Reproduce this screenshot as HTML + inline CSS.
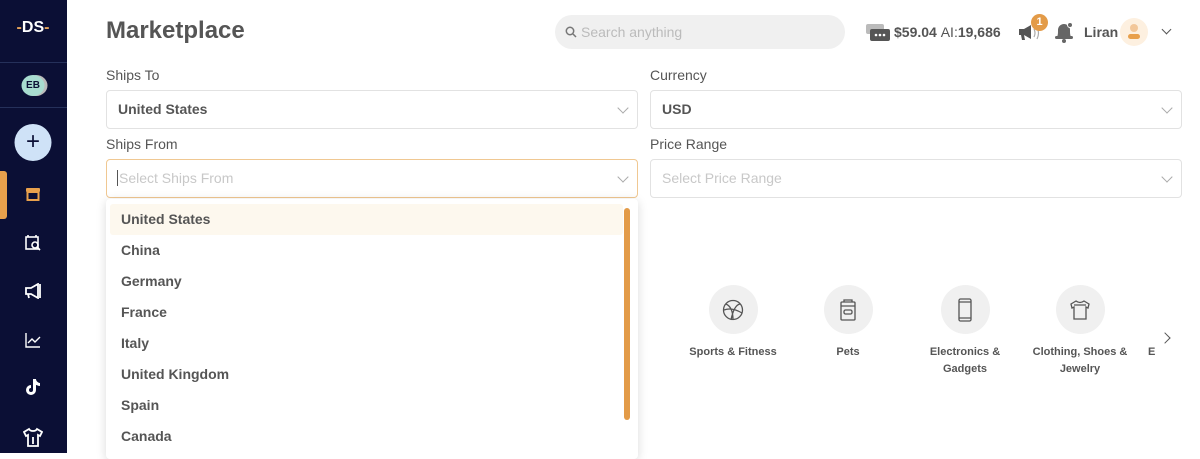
<!DOCTYPE html>
<html><head><meta charset="utf-8"><style>
*{box-sizing:border-box;margin:0;padding:0}
body{width:1200px;height:453px;overflow:hidden;background:#fff;font-family:"Liberation Sans",sans-serif;color:#444;position:relative}
.sb{position:absolute;left:0;top:0;width:67px;height:453px;background:#0b0f35}
.sep{position:absolute;left:0;width:67px;height:1px;background:#25305a}
.ic{position:absolute;left:33px;transform:translateX(-50%)}
.lbl{position:absolute;font-size:14px;color:#555}
.sel{position:absolute;height:39px;border:1px solid #e2e2e2;border-radius:4px;font-size:14px;padding:0 11px;line-height:37px;font-weight:bold;color:#555}
.chev{position:absolute;right:10px;top:13px;width:8px;height:8px;border-right:1px solid #aaa;border-bottom:1px solid #aaa;transform:rotate(45deg)}
.ph{color:#c8c8c8;font-weight:normal}
.dd{position:absolute;left:106px;top:199px;width:532px;height:260px;background:#fff;border-radius:4px;box-shadow:0 2px 10px rgba(0,0,0,.15)}
.opt{height:31px;line-height:31px;padding-left:11px;font-size:14px;color:#555;font-weight:bold;margin:0 15px 0 4px;border-radius:3px}
.cat{position:absolute;text-align:center;font-size:11px;font-weight:bold;color:#555;line-height:17px}
.circ{width:49px;height:49px;border-radius:50%;background:#f0f0f0;margin:0 auto 10px;display:flex;align-items:center;justify-content:center}
</style></head><body>
<div class="sb">
 <div class="ic" style="top:19px;color:#fff;font-weight:bold;font-size:16px;white-space:nowrap"><span style="color:#e8a45a">-</span>DS<span style="color:#e8a45a">-</span></div>
 <div class="sep" style="top:62px"></div>
 <div class="ic" style="top:75px;width:23px;height:21px;border-radius:50%;background:#a8dcd0;color:#0b0f35;font-size:10px;font-weight:bold;text-align:center;line-height:21px;box-shadow:3px 0 0 #bbb">EB</div>
 <div class="sep" style="top:107px"></div>
 <div class="ic" style="top:124px;width:37px;height:37px;border-radius:50%;background:#cfe2f7;color:#0b0f35;font-size:24px;text-align:center;line-height:36px">+</div>
 <div style="position:absolute;left:0;top:171px;width:7px;height:48px;background:#e8a04c;border-radius:0 3px 3px 0"></div>
 <svg class="ic" style="top:187px" width="16" height="14" viewBox="0 0 16 14"><rect x="1" y="1" width="14" height="4" rx="1" fill="#e8a04c"/><rect x="2.5" y="5" width="11" height="8" fill="none" stroke="#e8a04c" stroke-width="2"/></svg>
 <svg class="ic" style="top:234px" width="18" height="18" viewBox="0 0 18 18" fill="none" stroke="#fff" stroke-width="1.6"><rect x="2" y="3" width="12" height="12"/><circle cx="11" cy="11" r="3"/><path d="M13 13l3 3M4 3V1M12 3V1"/></svg>
 <svg class="ic" style="top:283px" width="18" height="16" viewBox="0 0 18 16" fill="none" stroke="#fff" stroke-width="1.8"><path d="M2 5h5l7-4v14l-7-4H2zM4 11l1 4M16 1v14"/></svg>
 <svg class="ic" style="top:332px" width="16" height="16" viewBox="0 0 16 16" fill="none" stroke="#fff" stroke-width="1.4"><path d="M1 1v14h14M3 11l4-4 3 3 5-5"/></svg>
 <svg class="ic" style="top:379px" width="14" height="16" viewBox="0 0 14 16" fill="#fff"><path d="M7 0h3c0 2 2 4 4 4v3c-2 0-3-1-4-1v5a5 5 0 1 1-5-5v3a2 2 0 1 0 2 2z"/></svg>
 <svg class="ic" style="top:427px" width="20" height="20" viewBox="0 0 20 20" fill="none" stroke="#fff" stroke-width="1.8"><path d="M6 2l-5 3 2 4 2-1v11h10V8l2 1 2-4-5-3c-1 2-3 2-4 2s-3 0-4-2z"/><path d="M10 10v7"/></svg>
</div>

<div style="position:absolute;left:106px;top:17px;font-size:24px;font-weight:bold;color:#555">Marketplace</div>
<div style="position:absolute;left:555px;top:15px;width:290px;height:34px;border-radius:17px;background:#f0f0f0;font-size:14px;color:#bbb;line-height:34px;padding-left:26px">Search anything
 <svg style="position:absolute;left:10px;top:11px" width="12" height="12" viewBox="0 0 12 12" fill="none" stroke="#777" stroke-width="1.5"><circle cx="5" cy="5" r="3.7"/><path d="M8 8l3 3"/></svg></div>
<svg style="position:absolute;left:866px;top:24px" width="24" height="17" viewBox="0 0 24 17"><rect x="0" y="0" width="18" height="10" rx="2" fill="#bbb"/><rect x="4" y="5" width="20" height="12" rx="2" fill="#555"/><circle cx="10" cy="11" r="1.3" fill="#fff"/><circle cx="14" cy="11" r="1.3" fill="#fff"/><circle cx="18" cy="11" r="1.3" fill="#fff"/></svg>
<div style="position:absolute;left:894px;top:24px;font-size:14px;color:#555;font-weight:bold">$59.04 <span style="font-weight:normal">AI:</span>19,686</div>
<svg style="position:absolute;left:1018px;top:24px" width="22" height="18" viewBox="0 0 22 18"><path d="M1 5h5l7-4v14l-7-4H1zM3 11l1 5h3l-1-5z" fill="#555"/><path d="M16 5q2 4 0 8M19 3q3 6 0 12" stroke="#aaa" fill="none" stroke-width="1.2"/></svg>
<div style="position:absolute;left:1031px;top:14px;width:17px;height:17px;border-radius:50%;background:#e39b48;color:#fff;font-size:11px;font-weight:bold;text-align:center;line-height:17px">1</div>
<svg style="position:absolute;left:1054px;top:21px" width="20" height="22" viewBox="0 0 20 22"><path d="M3 16c1-2 1-4 1-7a6 6 0 0 1 12 0c0 3 0 5 1 7z" fill="#666"/><rect x="1" y="15" width="18" height="3" rx="1.5" fill="#666"/><circle cx="10" cy="20" r="2" fill="#666"/><circle cx="16" cy="4" r="2.5" fill="#666" stroke="#fff"/></svg>
<div style="position:absolute;left:1084px;top:24px;font-size:14px;font-weight:bold;color:#555">Liran</div>
<div style="position:absolute;left:1120px;top:18px;width:28px;height:28px;border-radius:50%;background:#fdf0e0"><div style="position:absolute;left:10px;top:6px;width:8px;height:8px;border-radius:50%;background:#f2c79a"></div><div style="position:absolute;left:8px;top:16px;width:12px;height:5px;border-radius:3px;background:#e8a04c"></div></div>
<div style="position:absolute;left:1163px;top:26px;width:7px;height:7px;border-right:1.6px solid #555;border-bottom:1.6px solid #555;transform:rotate(45deg)"></div>

<div class="lbl" style="left:106px;top:67px">Ships To</div>
<div class="sel" style="left:106px;top:90px;width:532px">United States<div class="chev"></div></div>
<div class="lbl" style="left:650px;top:67px">Currency</div>
<div class="sel" style="left:650px;top:90px;width:532px">USD<div class="chev"></div></div>
<div class="lbl" style="left:106px;top:136px">Ships From</div>
<div class="sel" style="left:106px;top:159px;width:532px;border-color:#f0c892;padding-left:10px"><span class="ph"><span style="border-left:1px solid #555;margin-right:1px"></span>Select Ships From</span><div class="chev"></div></div>
<div class="lbl" style="left:650px;top:136px">Price Range</div>
<div class="sel" style="left:650px;top:159px;width:532px"><span class="ph">Select Price Range</span><div class="chev"></div></div>

<div class="cat" style="left:680px;top:285px;width:106px"><div class="circ"><svg width="22" height="22" viewBox="0 0 22 22" fill="none" stroke="#555" stroke-width="1.3"><circle cx="11" cy="11" r="9.5"/><path d="M4 5q7 3 7 16M18 5q-6 1-9 16M2 11q8-3 18 3"/></svg></div>Sports &amp; Fitness</div>
<div class="cat" style="left:800px;top:285px;width:96px"><div class="circ"><svg width="16" height="22" viewBox="0 0 16 22" fill="none" stroke="#555" stroke-width="1.3"><rect x="1" y="3" width="14" height="18" rx="1"/><path d="M4 3V1h8v2M1 7h14"/><rect x="4" y="11" width="8" height="4" rx="1.5"/></svg></div>Pets</div>
<div class="cat" style="left:917px;top:285px;width:96px"><div class="circ"><svg width="14" height="24" viewBox="0 0 14 24" fill="none" stroke="#555" stroke-width="1.3"><rect x="1" y="1" width="12" height="22" rx="1.5"/><path d="M1 4h12M1 20h12"/></svg></div>Electronics &amp;<br>Gadgets</div>
<div class="cat" style="left:1030px;top:285px;width:100px"><div class="circ"><svg width="20" height="20" viewBox="0 0 20 20" fill="none" stroke="#555" stroke-width="1.3"><path d="M6 1L1 4l1 4 2-1v12h12V7l2 1 1-4-5-3q-4 3-8 0zM4 5h12"/></svg></div>Clothing, Shoes &amp;<br>Jewelry</div>
<div style="position:absolute;left:1161px;top:334px;width:8px;height:8px;border-right:1.3px solid #555;border-top:1.3px solid #555;transform:rotate(45deg)"></div>
<div class="cat" style="left:1148px;top:344px">E</div>

<div class="dd">
 <div style="height:5px"></div>
 <div class="opt" style="background:#fdf8ee">United States</div>
 <div class="opt">China</div>
 <div class="opt">Germany</div>
 <div class="opt">France</div>
 <div class="opt">Italy</div>
 <div class="opt">United Kingdom</div>
 <div class="opt">Spain</div>
 <div class="opt">Canada</div>
 <div style="position:absolute;left:518px;top:9px;width:6px;height:212px;border-radius:3px;background:#e39b48"></div>
</div>
</body></html>
